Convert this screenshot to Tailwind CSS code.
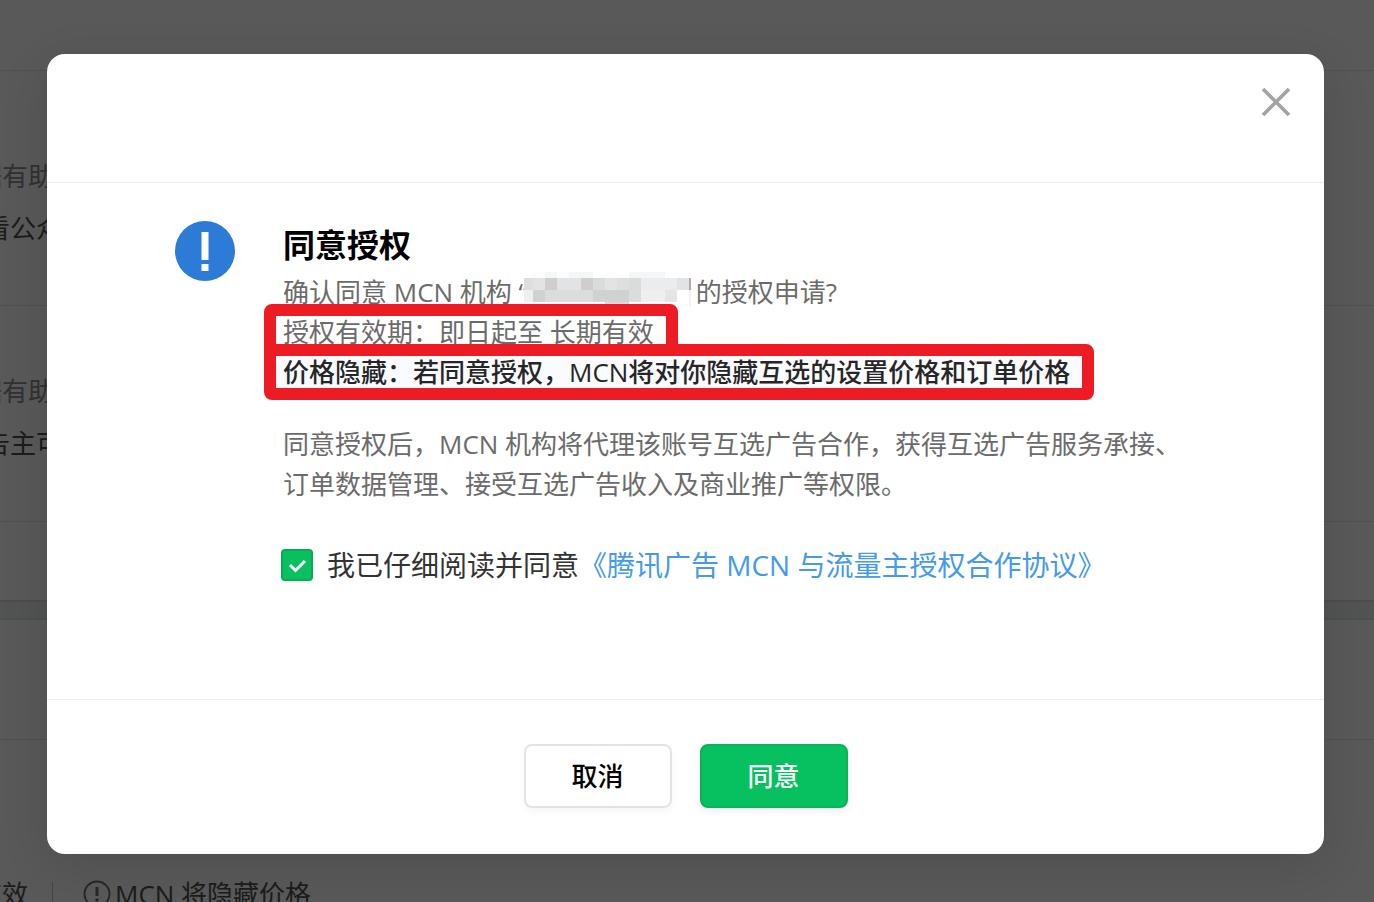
<!DOCTYPE html>
<html lang="zh-CN">
<head>
    <meta charset="UTF-8">
    <meta name="viewport" content="width=device-width, initial-scale=1.0">
    <title>同意授权</title>
    <script src="https://cdn.jsdelivr.net/npm/@tailwindcss/browser@4"></script>
</head>
<body class="relative min-h-screen overflow-hidden bg-white font-['Open_Sans','Noto_Sans_CJK_SC',sans-serif] text-[26px] leading-10">
    <!-- page under the mask -->
    <main class="absolute inset-0 overflow-hidden whitespace-nowrap text-[#505050]" aria-hidden="true">
        <div class="h-[71px] border-b border-[#e4e4e4]"></div>
        <section class="h-[235px] border-b border-[#e4e4e4] pt-[85px]">
            <p class="-ml-6 text-[#8c8c8c]">据有助</p>
            <p class="-ml-4 mt-3">看公众</p>
        </section>
        <section class="h-[216px] border-b border-[#e4e4e4] pt-[65px]">
            <p class="-ml-6 text-[#8c8c8c]">据有助</p>
            <p class="-ml-4 mt-3">告主可</p>
        </section>
        <div class="h-20 border-b-2 border-[#dcdcdc]"></div>
        <div class="h-[18px] border-b-2 border-[#e0e4e4] bg-[#ebf0f0]"></div>
        <div class="h-[120px] border-b border-[#e4e4e4]"></div>
        <div class="flex items-center pt-[134px]">
            <span class="-ml-6">有效</span>
            <span class="ml-6 h-6 w-px bg-[#c4c4c4]"></span>
            <svg class="ml-[30px] size-7" viewBox="0 0 28 28" fill="none" stroke="#707070" stroke-width="2">
                <circle cx="14" cy="14" r="12.5" />
                <path d="M14 7v9M14 18.500v3" stroke-width="3" />
            </svg>
            <span class="ml-1">MCN 将隐藏价格</span>
        </div>
    </main>

    <!-- mask + dialog -->
    <div class="relative min-h-screen bg-black/65 pt-[54px] pr-[50px] pb-12 pl-[47px]">
        <div role="dialog" aria-labelledby="dialog-title" class="rounded-[18px] bg-white shadow-[0_12px_48px_rgba(0,0,0,0.12)]">
            <header class="flex h-[129px] items-start justify-end border-b border-[#ededed] pt-8 pr-8">
                <button type="button" aria-label="关闭" class="size-8">
                    <svg viewBox="0 0 32 32" fill="none" stroke="#a3a3a3" stroke-width="3.6">
                        <path d="M3 3l26 26M29 3L3 29" />
                    </svg>
                </button>
            </header>

            <div class="flex gap-12 border-b border-[#ededed] px-32 pt-[38px] pb-[113px]">
                <svg class="size-[60px] shrink-0" viewBox="0 0 60 60">
                    <circle cx="30" cy="30" r="30" fill="#2b7bd7" />
                    <path d="M26.500 11h7v28h-7zM26.500 43h7v7h-7z" fill="#fff" />
                </svg>
                <div class="whitespace-nowrap text-[#6b6b6b]">
                    <h3 id="dialog-title" class="mb-[3px] text-[32px] leading-[48px] font-bold text-black">同意授权</h3>
                    <p class="flex">
                        <span>确认同意 MCN 机构 “</span>
                        <!-- mosaic over the agency name, covers the end of the quote mark -->
                        <svg class="relative -ml-1 h-10 w-[172px]" viewBox="0 0 172 40" shape-rendering="crispEdges">
                            <path d="M0 0h165v30H0z" fill="#fff" />
                            <path d="M9 0h12v6H9zM33 0h12v6H33zM81 0h12v6H81z" fill="#fcfcfc" />
                            <path d="M21 0h12v6H21zM45 0h24v6H45zM105 0h12v6h-12zM117 0h24v6h-24z" fill="#f5f6f6" />
                            <path d="M0 6h9v12H0zM57 6h12v12H57zM93 6h12v12H93z" fill="#dedede" />
                            <path d="M9 6h12v12H9zM33 6h24v12H33zM81 6h12v12H81zM153 6h12v12h-12z" fill="#e2e3e4" />
                            <path d="M21 6h12v12H21zM57 6h12v12H57z" fill="#cfcecd" />
                            <path d="M69 6h12v12H69zM105 6h12v12h-12z" fill="#dadbdc" />
                            <path d="M117 6h12v12h-12zM129 6h24v12h-24z" fill="#eaeced" />
                            <path d="M0 18h9v12H0zM117 18h24v12h-24z" fill="#eeefee" />
                            <path d="M9 18h12v12H9zM69 18h36v12H69z" fill="#d0d1d1" />
                            <path d="M21 18h36v12H21zM57 18h12v12H57zM105 18h12v12h-12z" fill="#dbdcdc" />
                            <path d="M141 18h12v12h-12z" fill="#e5e5e5" />
                            <path d="M81 30h24v2H81z" fill="#d8d8d8" />
                            <path d="M165 6h2v12h-2z" fill="#b3aaa5" />
                            <path d="M165 18h2v16h-2z" fill="#f4f2ee" />
                        </svg>
                        <span>的授权申请?</span>
                    </p>
                    <p class="relative w-fit">
                        授权有效期：即日起至 长期有效
                        <span class="absolute -top-2 -right-6 -bottom-2 -left-[19px] rounded-lg border-12 border-[#ed1c24]"></span>
                    </p>
                    <p class="relative isolate w-fit text-[#262626]">
                        <span class="absolute -inset-y-2 -right-6 -left-[19px] -z-10 rounded-lg border-12 border-[#ed1c24] bg-[#fafbff]"></span>
                        <span class="font-medium">价格隐藏：若同意授权，</span>MCN<span class="font-medium">将对你隐藏互选的设置价格和订单价格</span>
                    </p>
                    <p class="mt-8">
                        同意授权后，MCN 机构将代理该账号互选广告合作，获得互选广告服务承接、<br>
                        订单数据管理、接受互选广告收入及商业推广等权限。
                    </p>
                    <div class="mt-10 -ml-0.5 flex items-center text-[28px] leading-[42px] text-[#333]">
                        <span class="relative size-8">
                            <input id="agree" type="checkbox" checked class="block size-8 appearance-none rounded-sm border-2 border-[#06ad56] bg-[#07c160]">
                            <svg class="pointer-events-none absolute inset-0" viewBox="0 0 32 32" fill="none" stroke="#fff" stroke-width="3">
                                <path d="M9 16l5.500 5.500L24 12" />
                            </svg>
                        </span>
                        <label for="agree" class="ml-3.5">我已仔细阅读并同意</label>
                        <a href="#" class="text-[#459ae9]">《腾讯广告 MCN 与流量主授权合作协议》</a>
                    </div>
                </div>
            </div>

            <footer class="flex justify-center gap-7 pt-11 pb-[46px] font-medium">
                <button type="button" class="h-16 w-[148px] rounded-lg border-2 border-[#e4e4e4] bg-white text-black shadow-[0_4px_8px_rgba(0,0,0,0.04)]">取消</button>
                <button type="button" class="h-16 w-[148px] rounded-lg border-2 border-[#06b459] bg-[#07c160] text-white shadow-[0_4px_8px_rgba(0,0,0,0.06)]">同意</button>
            </footer>
        </div>
    </div>
</body>
</html>
